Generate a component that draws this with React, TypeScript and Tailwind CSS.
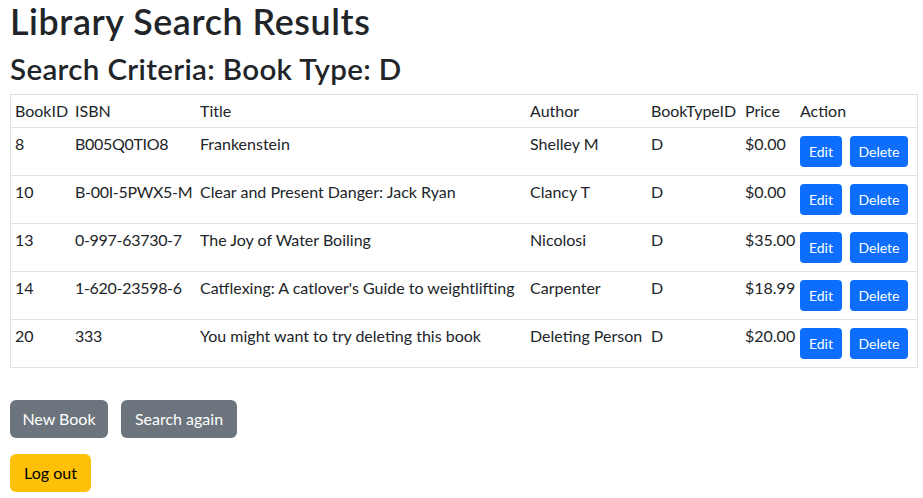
import React from "react";

const rows = [
  { id: "8", isbn: "B005Q0TIO8", title: "Frankenstein", author: "Shelley M", type: "D", price: "$0.00" },
  { id: "10", isbn: "B-00I-5PWX5-M", title: "Clear and Present Danger: Jack Ryan", author: "Clancy T", type: "D", price: "$0.00" },
  { id: "13", isbn: "0-997-63730-7", title: "The Joy of Water Boiling", author: "Nicolosi", type: "D", price: "$35.00" },
  { id: "14", isbn: "1-620-23598-6", title: "Catflexing: A catlover's Guide to weightlifting", author: "Carpenter", type: "D", price: "$18.99" },
  { id: "20", isbn: "333", title: "You might want to try deleting this book", author: "Deleting Person", type: "D", price: "$20.00" },
];

const grid = "grid grid-cols-[60px_125px_330px_121px_94px_55px_121px]";

export default function App() {
  return (
    <div
      className="min-h-[498px] bg-white pl-[10px] text-[#212529]"
      style={{ fontFamily: "Lato, 'Noto Sans', sans-serif" }}
    >
      <h1 className="mb-2 text-[35.8px] font-semibold leading-[43px] tracking-[0.6px]">Library Search Results</h1>
      <h2 className="mb-2 text-[29.5px] font-semibold leading-[35px] tracking-[0.35px]">Search Criteria: Book Type: D</h2>

      <div className="w-[908px] border border-[#dee2e6] text-base leading-6">
        <div className={`${grid} border-b border-[#dee2e6]`}>
          {["BookID", "ISBN", "Title", "Author", "BookTypeID", "Price", "Action"].map((h) => (
            <div key={h} className="p-1 whitespace-nowrap">
              {h}
            </div>
          ))}
        </div>
        {rows.map((r, i) => (
          <div
            key={r.id}
            className={`${grid} h-[47px] ${i < rows.length - 1 ? "box-content border-b border-[#dee2e6]" : ""}`}
          >
            <div className="p-1">{r.id}</div>
            <div className="p-1 whitespace-nowrap tracking-[-0.3px]">{r.isbn}</div>
            <div className="p-1 whitespace-nowrap">{r.title}</div>
            <div className="p-1 whitespace-nowrap">{r.author}</div>
            <div className="p-1">{r.type}</div>
            <div className="p-1 whitespace-nowrap">{r.price}</div>
            <div className="flex gap-2 px-1 pt-2">
              <button className="h-[31px] w-[42px] rounded bg-[#0d6efd] text-sm text-white">Edit</button>
              <button className="h-[31px] w-[58px] rounded bg-[#0d6efd] text-sm text-white">Delete</button>
            </div>
          </div>
        ))}
      </div>

      <div className="mt-8 flex gap-[13px]">
        <button className="h-[38px] w-[98px] rounded-md bg-[#6c757d] text-base text-white">New Book</button>
        <button className="h-[38px] w-[116px] rounded-md bg-[#6c757d] text-base text-white">Search again</button>
      </div>
      <div className="mt-4">
        <button className="h-[38px] w-[81px] rounded-md bg-[#ffc107] text-base text-black">Log out</button>
      </div>
    </div>
  );
}
